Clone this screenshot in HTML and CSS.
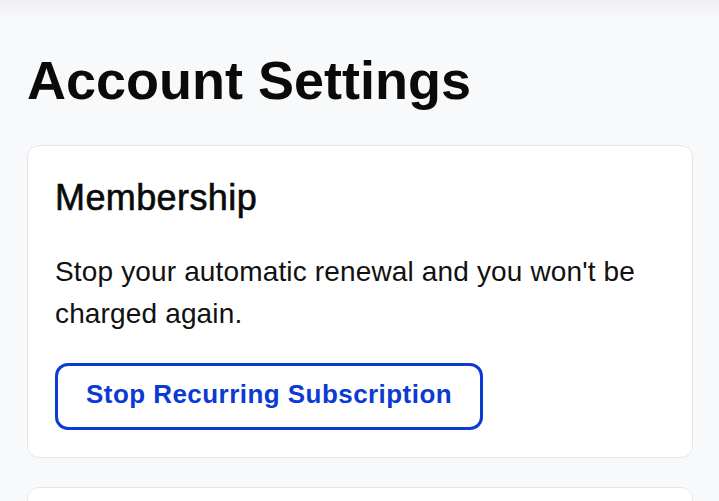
FILE: index.html
```html
<!DOCTYPE html>
<html lang="en">
<head>
    <meta charset="UTF-8">
    <meta name="viewport" content="width=device-width, initial-scale=1.0">
    <title>Account Settings</title>
    <link rel="stylesheet" href="styles.css">
</head>
<body>

    <div class="header-shadow"></div>

    <main class="settings">
        <h1>Account Settings</h1>

        <section class="card">
            <h2>Membership</h2>
            <p>Stop your automatic renewal and you won't be charged again.</p>
            <button class="btn-outline" type="button">Stop Recurring Subscription</button>
        </section>

        <section class="card">
            <h2>Payment Method</h2>
            <p>Update the card we use for your membership.</p>
        </section>
    </main>

</body>
</html>
```

FILE: styles.css
```css
body {
    margin: 0;
    font-family: "Liberation Sans", Arial, sans-serif;
    background-color: #f8f9fb;
    color: #0a0a0a;
}

.header-shadow {
    position: fixed;
    top: 0;
    left: 0;
    right: 0;
    height: 18px;
    background: linear-gradient(to bottom, #eeeff3, rgba(248, 249, 251, 0));
    pointer-events: none;
}

.settings {
    padding: 48px 26px 40px 27px;
}

h1 {
    margin: 0 0 33px;
    font-size: 54px;
    line-height: 64px;
    font-weight: 700;
}

.card {
    background-color: #fff;
    border: 1px solid #e4e6ea;
    border-radius: 12px;
    padding: 30px 26px 27px;
    margin-bottom: 29px;
}

.card h2 {
    margin: 0 0 0 1px;
    font-size: 36px;
    line-height: 44px;
    font-weight: 400;
    letter-spacing: 0.4px;
    -webkit-text-stroke: 0.6px currentColor; /* medium weight */
}

.card p {
    margin: 31px 0 0 1px;
    font-size: 28px;
    line-height: 42px;
    letter-spacing: 0.15px;
    color: #111;
}

.btn-outline {
    margin: 28px 0 0 1px;
    padding: 14px 28px 18px;
    font-family: inherit;
    font-size: 26px;
    line-height: 29px;
    font-weight: 700;
    letter-spacing: 0.45px;
    color: #0b3bd3;
    background-color: #fff;
    border: 3px solid #0b3bd3;
    border-radius: 13px;
    cursor: pointer;
}

.btn-outline:hover {
    background-color: #f0f4ff;
}
```
